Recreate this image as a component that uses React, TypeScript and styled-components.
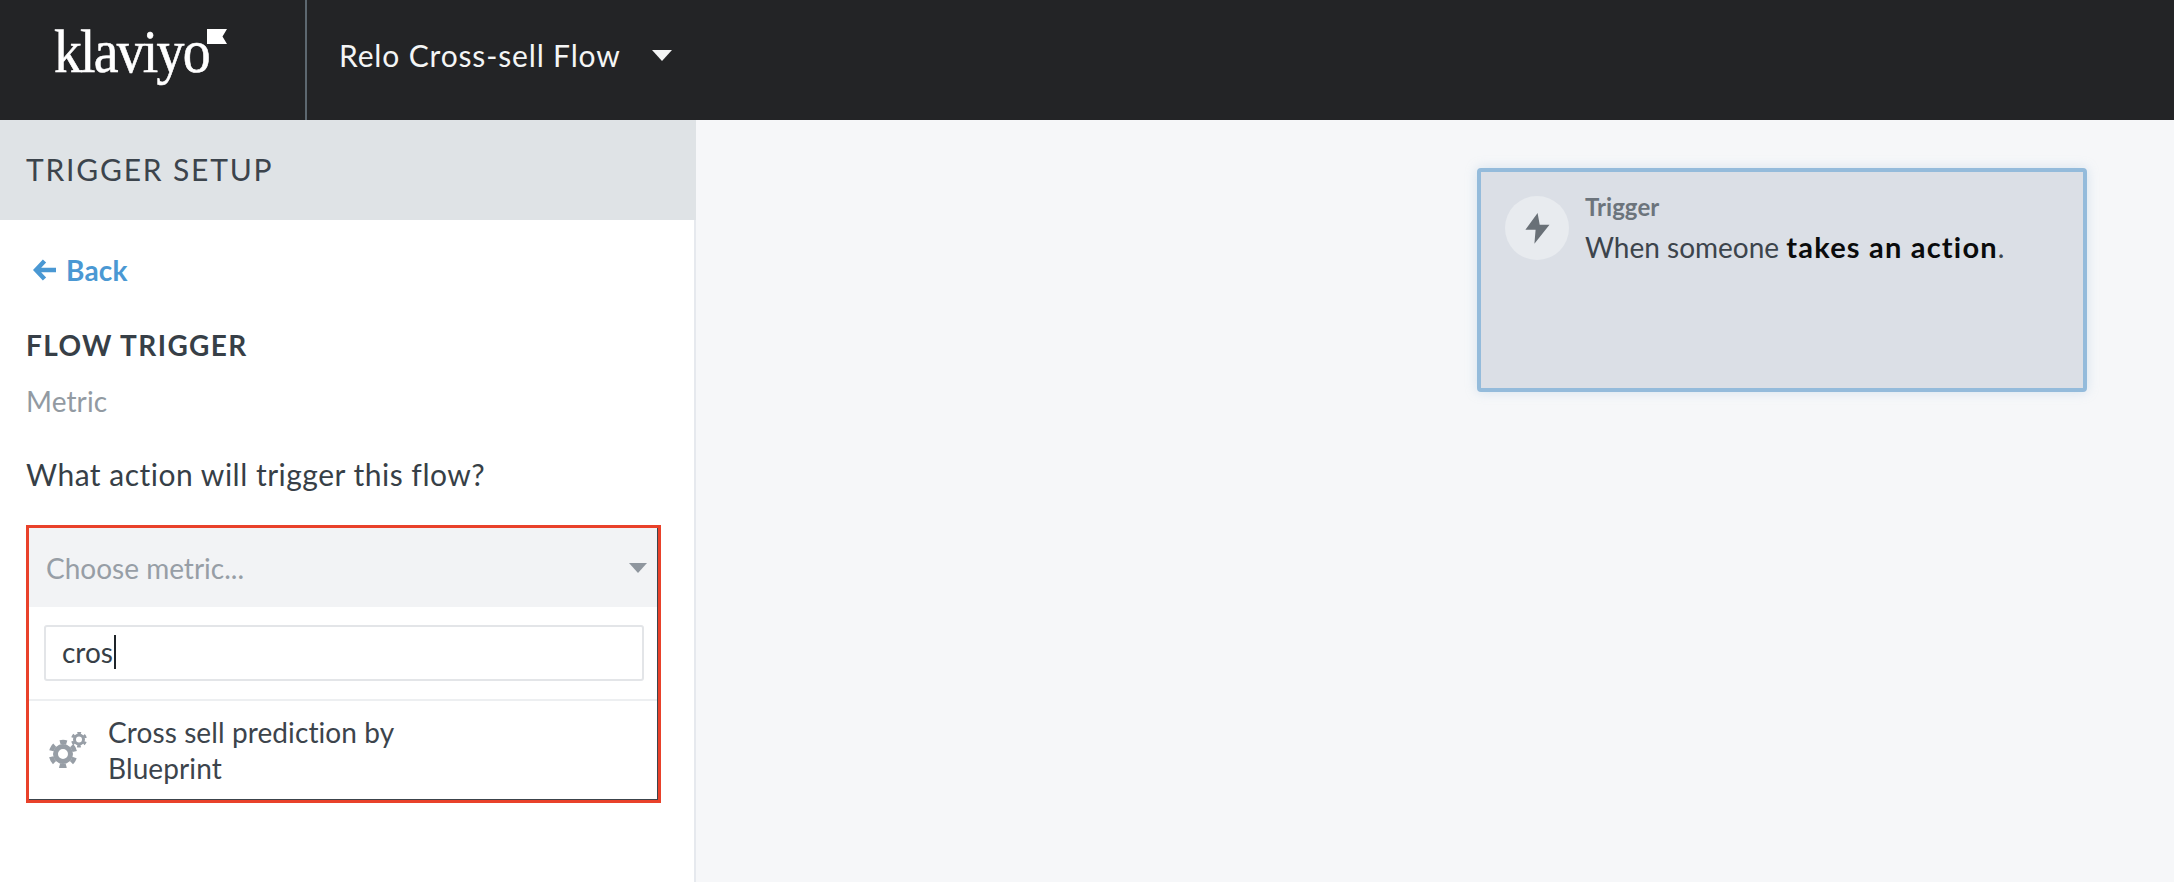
import { FC } from "react";
import styled, { createGlobalStyle } from "styled-components";

const GlobalStyle = createGlobalStyle`
    html, body {
        margin: 0;
        height: 100%;
        overflow: hidden;
    }

    body {
        font-family: Lato, "Open Sans", sans-serif;
        color: #373f47;
    }
`;

const Page = styled.div`
    display: flex;
    flex-direction: column;
    width: 2174px;
    height: 882px;
`;

const TopBar = styled.header`
    display: flex;
    align-items: stretch;
    flex: 0 0 120px;
    background: #232426;
`;

const LogoCell = styled.div`
    display: flex;
    align-items: flex-start;
    box-sizing: border-box;
    width: 307px;
    padding: 20px 0 0 54px;
    border-right: 2px solid #5d6870;
`;

const LogoText = styled.span`
    display: inline-block;
    font-family: "Liberation Serif", serif;
    font-size: 62px;
    line-height: 62px;
    letter-spacing: -2px;
    color: #fff;
    -webkit-text-stroke: 0.6px #fff;
    transform: scaleX(0.9);
    transform-origin: left center;
`;

const LogoFlag = styled.svg`
    width: 20px;
    height: 15px;
    margin: 9px 0 0 -19px;
`;

const FlowTitle = styled.div`
    display: flex;
    align-items: center;
    gap: 31px;
    height: 110px;
    padding-left: 32px;
    font-size: 30px;
    letter-spacing: 0.85px;
    color: #f4f5f5;
`;

const Caret = styled.span<{ $color: string; $w: number; $h: number }>`
    display: block;
    width: 0;
    height: 0;
    border-left: ${({ $w }) => $w}px solid transparent;
    border-right: ${({ $w }) => $w}px solid transparent;
    border-top: ${({ $h }) => $h}px solid ${({ $color }) => $color};
`;

const Body = styled.div`
    display: flex;
    flex: 1;
    min-height: 0;
`;

const SidePanel = styled.aside`
    box-sizing: border-box;
    flex: 0 0 696px;
    background: #fff;
    border-right: 2px solid #e6e9ee;
`;

const PanelHead = styled.div`
    display: flex;
    align-items: center;
    height: 100px;
    margin-right: -2px;
    padding: 0 0 2px 26px;
    box-sizing: border-box;
    background: #dfe3e6;
    font-size: 30px;
    letter-spacing: 1.8px;
    color: #3c444c;
`;

const PanelBody = styled.div`
    padding: 0 33px 0 26px;
`;

const BackLink = styled.a`
    display: flex;
    align-items: center;
    gap: 10px;
    height: 34px;
    margin: 33px 0 0 7px;
    font-size: 28px;
    font-weight: 700;
    letter-spacing: 0.2px;
    color: #4a98d3;
`;

const SectionTitle = styled.div`
    margin-top: 41px;
    font-size: 28px;
    line-height: 34px;
    font-weight: 700;
    letter-spacing: 1.4px;
    color: #373f47;
`;

const MetricLabel = styled.div`
    margin-top: 22px;
    font-size: 28px;
    line-height: 34px;
    letter-spacing: 0.1px;
    color: #929aa2;
`;

const Question = styled.div`
    margin-top: 39px;
    font-size: 30px;
    line-height: 34px;
    letter-spacing: 0.5px;
    color: #373f47;
`;

const MetricBox = styled.div`
    box-sizing: border-box;
    width: 635px;
    height: 278px;
    margin-top: 34px;
    border: 3px solid #e9412a;
`;

const MetricInner = styled.div`
    box-sizing: border-box;
    height: 100%;
    border-right: 1px solid #3c444c;
    border-bottom: 1px solid #3c444c;
`;

const SelectRow = styled.div`
    display: flex;
    align-items: center;
    justify-content: space-between;
    box-sizing: border-box;
    height: 79px;
    padding: 0 10px 0 17px;
    background: #f2f3f5;
    font-size: 28px;
    color: #979ea6;
`;

const SearchRow = styled.div`
    box-sizing: border-box;
    height: 94px;
    padding: 18px 13px 0 15px;
    border-bottom: 2px solid #edeff1;
`;

const SearchField = styled.div`
    display: flex;
    align-items: center;
    box-sizing: border-box;
    height: 56px;
    padding: 0 0 2px 16px;
    border: 2px solid #e3e5e8;
    border-radius: 3px;
    font-size: 28px;
    color: #373f47;
`;

const TextCursor = styled.span`
    width: 2px;
    height: 34px;
    margin-left: 1px;
    background: #1f2429;
`;

const ResultRow = styled.div`
    display: flex;
    align-items: center;
    gap: 21px;
    box-sizing: border-box;
    height: 100px;
    padding: 0 0 3px 20px;
`;

const ResultLabel = styled.div`
    font-size: 28px;
    line-height: 36px;
    letter-spacing: 0.1px;
    color: #3c444c;
`;

const Canvas = styled.main`
    position: relative;
    flex: 1;
    background: #f6f7f9;
`;

const TriggerNode = styled.div`
    position: absolute;
    left: 781px;
    top: 48px;
    display: flex;
    gap: 16px;
    box-sizing: border-box;
    width: 610px;
    height: 224px;
    padding: 24px 24px;
    background: #dbdfe6;
    border: 4px solid #94bbdb;
    border-radius: 4px;
    box-shadow: 0 0 12px rgba(148, 187, 219, 0.35);
`;

const NodeIcon = styled.div`
    display: flex;
    align-items: center;
    justify-content: center;
    flex: 0 0 64px;
    height: 64px;
    border-radius: 50%;
    background: #e8ebef;
`;

const NodeText = styled.div`
    display: flex;
    flex-direction: column;
    margin-top: -4px;
`;

const NodeKicker = styled.div`
    font-size: 24px;
    line-height: 30px;
    font-weight: 700;
    letter-spacing: 0.05px;
    color: #6c747c;
`;

const NodeSentence = styled.div`
    margin-top: 7px;
    font-size: 28px;
    line-height: 36px;
    color: #3c444c;

    strong {
        font-size: 29px;
        font-weight: 700;
        letter-spacing: 1.2px;
        color: #0a0b0c;
    }
`;

const GearIcon: FC = () => (
    <svg width="38" height="36" viewBox="0 0 38 36">
        <g fill="none" stroke="#979ea6">
            <circle cx="14" cy="22" r="7.5" strokeWidth="5" />
            <circle
                cx="14"
                cy="22"
                r="12"
                strokeWidth="4.5"
                strokeDasharray="6.6 5.97"
                strokeDashoffset="3.3"
                transform="rotate(30 14 22)"
            />
            <circle cx="30" cy="7.5" r="4.5" strokeWidth="3" />
            <circle
                cx="30"
                cy="7.5"
                r="6.8"
                strokeWidth="2.4"
                strokeDasharray="3.6 3.52"
                strokeDashoffset="1.8"
                transform="rotate(30 30 7.5)"
            />
        </g>
    </svg>
);

const App: FC = () => (
    <Page>
        <GlobalStyle />
        <TopBar>
            <LogoCell>
                <LogoText>klaviyo</LogoText>
                <LogoFlag viewBox="0 0 20 15">
                    <path d="M0 0H20L15.5 7.5L20 15H0Z" fill="#fff" />
                </LogoFlag>
            </LogoCell>
            <FlowTitle>
                Relo Cross-sell Flow
                <Caret $color="#f4f5f5" $w={10} $h={11} />
            </FlowTitle>
        </TopBar>
        <Body>
            <SidePanel>
                <PanelHead>TRIGGER SETUP</PanelHead>
                <PanelBody>
                    <BackLink>
                        <svg width="23" height="22" viewBox="0 0 23 22">
                            <path
                                d="M11.5 2L3 11L11.5 20M3 11H23"
                                fill="none"
                                stroke="#4a98d3"
                                strokeWidth="4.5"
                            />
                        </svg>
                        Back
                    </BackLink>
                    <SectionTitle>FLOW TRIGGER</SectionTitle>
                    <MetricLabel>Metric</MetricLabel>
                    <Question>What action will trigger this flow?</Question>
                    <MetricBox>
                        <MetricInner>
                            <SelectRow>
                                Choose metric...
                                <Caret $color="#8f969e" $w={9} $h={10} />
                            </SelectRow>
                            <SearchRow>
                                <SearchField>
                                    cros
                                    <TextCursor />
                                </SearchField>
                            </SearchRow>
                            <ResultRow>
                                <GearIcon />
                                <ResultLabel>
                                    Cross sell prediction by
                                    <br />
                                    Blueprint
                                </ResultLabel>
                            </ResultRow>
                        </MetricInner>
                    </MetricBox>
                </PanelBody>
            </SidePanel>
            <Canvas>
                <TriggerNode>
                    <NodeIcon>
                        <svg width="25" height="31" viewBox="0 0 25 31">
                            <path
                                d="M12.6 0L0.4 16.7H10.6L9.4 30.7L24.5 11.7H14.7Z"
                                fill="#697077"
                            />
                        </svg>
                    </NodeIcon>
                    <NodeText>
                        <NodeKicker>Trigger</NodeKicker>
                        <NodeSentence>
                            When someone <strong>takes an action</strong>.
                        </NodeSentence>
                    </NodeText>
                </TriggerNode>
            </Canvas>
        </Body>
    </Page>
);

export default App;
